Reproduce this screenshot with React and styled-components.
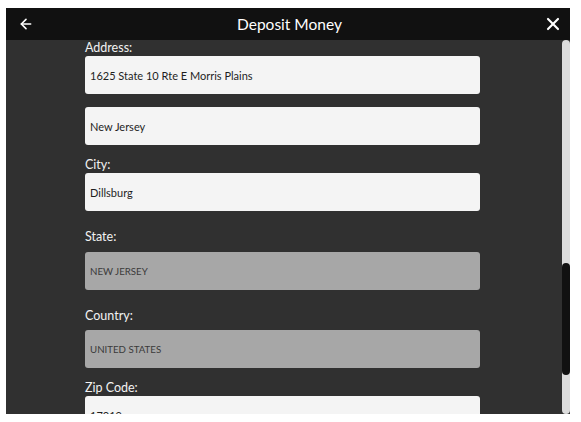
import { createGlobalStyle, styled } from "styled-components"
import { ArrowLeft, X } from "lucide-react"

const GlobalStyle = createGlobalStyle`
    html, body {
        margin: 0;
        background: #ffffff;
        font-family: Lato, "Open Sans", "Liberation Sans", sans-serif;
    }
`

const Page = styled.div`
    padding: 8px 11px 8px 6px;
`

const Panel = styled.div`
    display: flex;
    flex-direction: column;
    height: 406px;
    background-color: #303030;
`

const Header = styled.header`
    height: 32px;
    display: flex;
    align-items: center;
    justify-content: space-between;
    padding: 0 6px 0 9px;
    background-color: #111111;
    color: #ffffff;
`

const Title = styled.h1`
    margin: 0 0 1px;
    font-size: 15.5px;
    font-weight: 400;
`

const IconButton = styled.button`
    display: flex;
    align-items: center;
    justify-content: center;
    width: 22px;
    height: 22px;
    padding: 0;
    border: none;
    background: none;
    color: #ffffff;
`

const Body = styled.div`
    flex: 1;
    display: flex;
    min-height: 0;
`

const Form = styled.div`
    flex: 1;
    padding-left: 79px;
    overflow: hidden;
`

const Field = styled.div`
    width: 395px;
    margin-top: ${(p) => p.$top || 0}px;
`

const Label = styled.label`
    display: block;
    height: 16px;
    line-height: 16px;
    margin-bottom: ${(p) => p.$gap || 0}px;
    font-size: 12.5px;
    color: #f2f2f2;
`

const Input = styled.div`
    box-sizing: border-box;
    height: 38px;
    display: flex;
    align-items: center;
    padding: 0 5px;
    border-radius: 3px;
    background-color: ${(p) => (p.$disabled ? "#a7a7a7" : "#f4f4f4")};
    color: ${(p) => (p.$disabled ? "#3a3a3a" : "#1e1e1e")};
    font-size: ${(p) => (p.$disabled ? "9.7px" : "11px")};
    text-transform: ${(p) => (p.$disabled ? "uppercase" : "none")};
`

const Track = styled.div`
    width: 8px;
    display: flex;
    flex-direction: column;
    border-radius: 4px;
    background-color: #dcdcdc;
`

const Thumb = styled.div`
    width: 8px;
    height: 112px;
    margin-top: 223px;
    border-radius: 4px;
    background-color: #111111;
`

export default function App() {
    return (
        <Page>
            <GlobalStyle />
            <Panel>
                <Header>
                    <IconButton aria-label="Back">
                        <ArrowLeft size={16} strokeWidth={2.4} />
                    </IconButton>
                    <Title>Deposit Money</Title>
                    <IconButton aria-label="Close">
                        <X size={20} strokeWidth={2.6} />
                    </IconButton>
                </Header>
                <Body>
                    <Form>
                        <Field>
                            <Label>Address:</Label>
                            <Input>1625 State 10 Rte E Morris Plains</Input>
                        </Field>
                        <Field $top={13}>
                            <Input>New Jersey</Input>
                        </Field>
                        <Field $top={12}>
                            <Label>City:</Label>
                            <Input>Dillsburg</Input>
                        </Field>
                        <Field $top={18}>
                            <Label $gap={7}>State:</Label>
                            <Input $disabled>New Jersey</Input>
                        </Field>
                        <Field $top={18}>
                            <Label $gap={6}>Country:</Label>
                            <Input $disabled>United States</Input>
                        </Field>
                        <Field $top={12}>
                            <Label>Zip Code:</Label>
                            <Input>17019</Input>
                        </Field>
                    </Form>
                    <Track>
                        <Thumb />
                    </Track>
                </Body>
            </Panel>
        </Page>
    )
}
